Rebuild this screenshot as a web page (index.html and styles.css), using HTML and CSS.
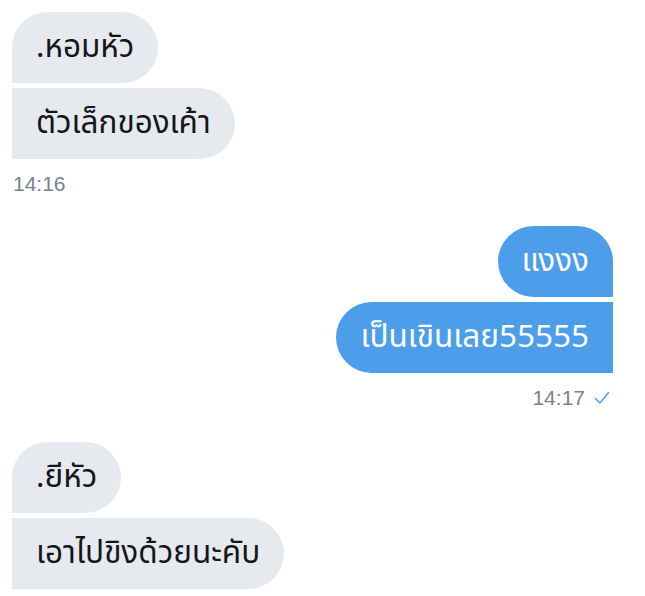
FILE: index.html
```html
<!DOCTYPE html>
<html lang="th">
<head>
<meta charset="utf-8">
<title>ข้อความ</title>
<link rel="stylesheet" href="styles.css">
</head>
<body>
<main class="thread">
  <section class="group in">
    <div class="bubble first">.หอมหัว</div>
    <div class="bubble last">ตัวเล็กของเค้า</div>
    <div class="meta">14:16</div>
  </section>
  <section class="group out">
    <div class="bubble first">แงงง</div>
    <div class="bubble last">เป็นเขินเลย55555</div>
    <div class="meta">14:17
      <svg class="tick" viewBox="0 0 16 14" width="16" height="14" aria-hidden="true">
        <path d="M1.5 7.5 L6 12 L14.5 1.5" fill="none" stroke="currentColor" stroke-width="1.5" stroke-linecap="round" stroke-linejoin="round"/>
      </svg>
    </div>
  </section>
  <section class="group in">
    <div class="bubble first">.ยีหัว</div>
    <div class="bubble last">เอาไปขิงด้วยนะคับ</div>
  </section>
</main>
</body>
</html>
```

FILE: styles.css
```css
* { box-sizing: border-box; }

html, body {
  margin: 0;
  background: #ffffff;
}

body {
  font-family: "Noto Sans Thai", "Noto Sans", "DejaVu Sans", sans-serif;
  -webkit-font-smoothing: antialiased;
}

.thread {
  display: flex;
  flex-direction: column;
  padding: 12px 32px 0 12px;
}

.group {
  display: flex;
  flex-direction: column;
  gap: 5px;
}

.group.in { align-items: flex-start; }
.group.out { align-items: flex-end; margin-top: 30px; }
.group.out + .group.in { margin-top: 32px; }

.bubble {
  height: 71px;
  display: flex;
  align-items: center;
  padding: 0 24px;
  font-size: 31.5px;
  line-height: 1;
  white-space: nowrap;
  border-radius: 36px;
}

.in .bubble {
  background: #e6e9ee;
  color: #14171a;
}
.in .bubble.first { border-bottom-left-radius: 0; }
.in .bubble.last { border-top-left-radius: 0; border-bottom-left-radius: 0; }

.out .bubble {
  background: #4c9eea;
  color: #ffffff;
}
.out .bubble.first { border-bottom-right-radius: 0; }
.out .bubble.last { border-top-right-radius: 0; border-bottom-right-radius: 0; }

.meta {
  margin-top: 8px;
  padding-left: 1px;
  font-family: "Liberation Sans", Arial, sans-serif;
  font-size: 21px;
  line-height: 24px;
  color: #76838f;
  display: flex;
  align-items: center;
  gap: 9px;
}

.out .meta { padding-right: 3px; }

.tick {
  color: #4c9eea;
  width: 16px;
  height: 14px;
}
```
